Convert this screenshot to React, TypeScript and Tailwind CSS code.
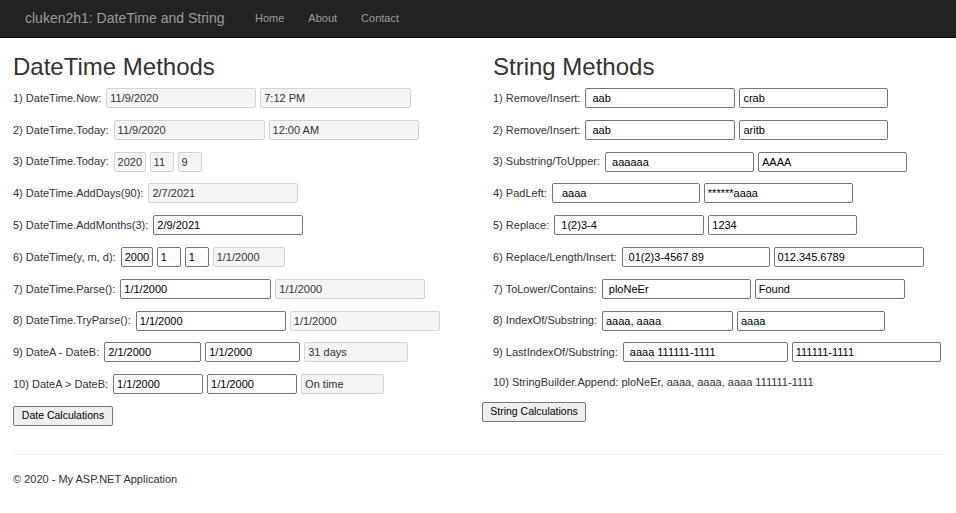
import React from "react";

type FieldProps = { value: string; w: number; ro?: boolean };

const Field = ({ value, w, ro }: FieldProps) => (
  <input
    type="text"
    defaultValue={value}
    readOnly
    style={{ width: w }}
    className={
      ro
        ? "h-[20px] rounded-[2px] border border-[#d3d3d3] bg-[#f5f5f5] px-[3px] text-[11px] text-[#333] outline-none"
        : "h-[20px] rounded-[2px] border border-[#767676] bg-white px-[3px] text-[11px] text-black outline-none"
    }
  />
);

type Row = { label: string; fields: FieldProps[] };

const dateRows: Row[] = [
  { label: "1) DateTime.Now:", fields: [{ value: "11/9/2020", w: 150, ro: true }, { value: "7:12 PM", w: 151, ro: true }] },
  { label: "2) DateTime.Today:", fields: [{ value: "11/9/2020", w: 151, ro: true }, { value: "12:00 AM", w: 150, ro: true }] },
  { label: "3) DateTime.Today:", fields: [{ value: "2020", w: 32, ro: true }, { value: "11", w: 24, ro: true }, { value: "9", w: 24, ro: true }] },
  { label: "4) DateTime.AddDays(90):", fields: [{ value: "2/7/2021", w: 150, ro: true }] },
  { label: "5) DateTime.AddMonths(3):", fields: [{ value: "2/9/2021", w: 150 }] },
  { label: "6) DateTime(y, m, d):", fields: [{ value: "2000", w: 32 }, { value: "1", w: 24 }, { value: "1", w: 24 }, { value: "1/1/2000", w: 72, ro: true }] },
  { label: "7) DateTime.Parse():", fields: [{ value: "1/1/2000", w: 151 }, { value: "1/1/2000", w: 150, ro: true }] },
  { label: "8) DateTime.TryParse():", fields: [{ value: "1/1/2000", w: 150 }, { value: "1/1/2000", w: 150, ro: true }] },
  { label: "9) DateA - DateB:", fields: [{ value: "2/1/2000", w: 97 }, { value: "1/1/2000", w: 95 }, { value: "31 days", w: 104, ro: true }] },
  { label: "10) DateA > DateB:", fields: [{ value: "1/1/2000", w: 90 }, { value: "1/1/2000", w: 90 }, { value: "On time", w: 83, ro: true }] },
];

const stringRows: Row[] = [
  { label: "1) Remove/Insert:", fields: [{ value: " aab", w: 150 }, { value: "crab", w: 149 }] },
  { label: "2) Remove/Insert:", fields: [{ value: " aab", w: 150 }, { value: "aritb", w: 149 }] },
  { label: "3) Substring/ToUpper:", fields: [{ value: " aaaaaa", w: 149 }, { value: "AAAA", w: 149 }] },
  { label: "4) PadLeft:", fields: [{ value: "  aaaa", w: 148 }, { value: "******aaaa", w: 149 }] },
  { label: "5) Replace:", fields: [{ value: " 1(2)3-4", w: 150 }, { value: "1234", w: 149 }] },
  { label: "6) Replace/Length/Insert:", fields: [{ value: " 01(2)3-4567 89", w: 148 }, { value: "012.345.6789", w: 150 }] },
  { label: "7) ToLower/Contains:", fields: [{ value: " ploNeEr", w: 149 }, { value: "Found", w: 150 }] },
  { label: "8) IndexOf/Substring:", fields: [{ value: "aaaa, aaaa", w: 131 }, { value: "aaaa", w: 148 }] },
  { label: "9) LastIndexOf/Substring:", fields: [{ value: " aaaa 111111-1111", w: 165 }, { value: "111111-1111", w: 149 }] },
];

const FormRow = ({ row }: { row: Row }) => (
  <div className="flex h-[20px] items-center gap-[4px]">
    <span className="mr-[1px] whitespace-nowrap">{row.label}</span>
    {row.fields.map((f, i) => (
      <Field key={i} {...f} />
    ))}
  </div>
);

const btn =
  "h-[20px] rounded-[2px] border border-[#767676] bg-[#efefef] text-center text-[10.5px] text-black";

export default function App() {
  return (
    <div className="min-h-screen bg-white font-['Liberation_Sans',Arial,sans-serif] text-[11px] text-[#333]">
      {/* Navbar */}
      <nav className="flex h-[38px] items-center border-b border-[#080808] bg-[#222]">
        <div className="w-[255px] pl-[25px] text-[14px] text-[#9d9d9d]">
          cluken2h1: DateTime and String
        </div>
        <div className="flex gap-[24px] text-[11px] text-[#9d9d9d]">
          <span>Home</span>
          <span>About</span>
          <span>Contact</span>
        </div>
      </nav>

      <main className="pl-[13px] pr-[7px]">
        <div className="grid grid-cols-[454px_1fr] gap-x-[26px] pt-[16px]">
          {/* DateTime column */}
          <div>
            <h2 className="text-[24px] leading-[26px] text-[#333]">DateTime Methods</h2>
            <div className="mt-[8px] flex flex-col gap-[11.8px]">
              {dateRows.map((r) => (
                <FormRow key={r.label} row={r} />
              ))}
              <div>
                <button className={`${btn} w-[100px]`}>Date Calculations</button>
              </div>
            </div>
          </div>

          {/* String column */}
          <div>
            <h2 className="text-[24px] leading-[26px] text-[#333]">String Methods</h2>
            <div className="mt-[8px] flex flex-col gap-[11.8px]">
              {stringRows.map((r) => (
                <FormRow key={r.label} row={r} />
              ))}
              <div className="flex h-[16px] items-center whitespace-nowrap">
                10) StringBuilder.Append: ploNeEr, aaaa, aaaa, aaaa 111111-1111
              </div>
              <div className="-ml-[11px]">
                <button className={`${btn} w-[104px]`}>String Calculations</button>
              </div>
            </div>
          </div>
        </div>

        <hr className="mt-[28px] border-[#eee]" />
        <footer className="mt-[16px] leading-[16px]">© 2020 - My ASP.NET Application</footer>
      </main>
    </div>
  );
}
